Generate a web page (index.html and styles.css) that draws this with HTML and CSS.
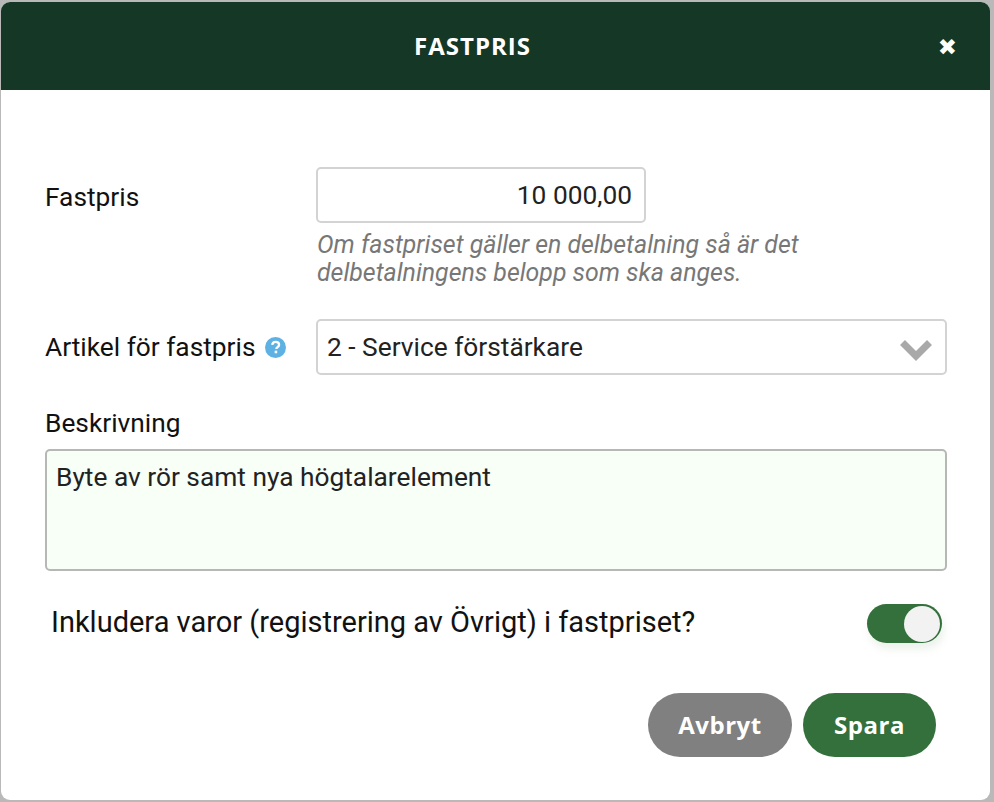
FILE: index.html
```html
<!DOCTYPE html>
<html>
<head>
    <title>Fastpris</title>
    <link rel="stylesheet" href="styles.css">
</head>
<body>
    <div class="modal">
        <div class="modal-header">
            <h1>FASTPRIS</h1>
            <span class="close">&#10006;</span>
        </div>
        <form class="modal-body">
            <!-- Price -->
            <div class="row price-row">
                <label class="side-label price-label" for="price">Fastpris</label>
                <div class="price-field">
                    <input type="text" id="price" class="price-input" value="10 000,00">
                    <p class="hint">Om fastpriset gäller en delbetalning så är det delbetalningens belopp som ska anges.</p>
                </div>
            </div>

            <!-- Article -->
            <div class="row article-row">
                <label class="side-label" for="article">Artikel för fastpris
                    <svg class="help" viewBox="0 0 20 20" width="21" height="21">
                        <circle cx="10" cy="10" r="10" fill="#5db2e3"/>
                        <path d="M6.9 7.6c.2-1.9 1.5-2.9 3.3-2.9 1.9 0 3.2 1.1 3.2 2.6 0 1.2-.6 1.8-1.6 2.5-.8.5-1 .8-1 1.7" fill="none" stroke="#fff" stroke-width="2.2"/>
                        <rect x="9.2" y="13" width="2.4" height="2.5" fill="#fff"/>
                    </svg>
                </label>
                <div class="select" id="article">
                    <span>2 - Service förstärkare</span>
                    <svg class="chevron" viewBox="0 0 32 21" width="32" height="21">
                        <path d="M2.5 2.5L16 16 29.5 2.5" fill="none" stroke="#a9a9a9" stroke-width="7"/>
                    </svg>
                </div>
            </div>

            <!-- Description -->
            <label class="desc-label" for="desc">Beskrivning</label>
            <textarea id="desc" class="desc">Byte av rör samt nya högtalarelement</textarea>

            <!-- Include goods -->
            <div class="row toggle-row">
                <span class="toggle-text">Inkludera varor (registrering av Övrigt) i fastpriset?</span>
                <span class="toggle"><span class="knob"></span></span>
            </div>

            <div class="buttons">
                <button type="button" class="btn btn-cancel">Avbryt</button>
                <button type="button" class="btn btn-save">Spara</button>
            </div>
        </form>
    </div>
</body>
</html>
```

FILE: styles.css
```css
html, body {
    height: 100%;
}

body {
    margin: 0;
    background-color: #b9b9b9;
    font-family: Roboto, "Liberation Sans", sans-serif;
    font-size: 26.3px;
    color: #111;
    overflow: hidden;
}

.modal {
    box-sizing: border-box;
    height: 798px;
    margin: 2px 4px 0 1px;
    background-color: #fff;
    border-radius: 9px;
    overflow: hidden;
}

.modal-header {
    box-sizing: border-box;
    height: 88px;
    display: flex;
    align-items: center;
    justify-content: center;
    position: relative;
    padding-right: 46px;
    background-color: #153726;
    color: #fff;
}

.modal-header h1 {
    margin: 0 0 2px;
    font-family: "Open Sans", sans-serif;
    font-size: 24px;
    font-weight: 700;
    letter-spacing: 1px;
}

.close {
    position: absolute;
    right: 33px;
    top: 31px;
    font-family: "DejaVu Sans", sans-serif;
    font-size: 23px;
    line-height: 28px;
}

.modal-body {
    display: block;
    padding: 77px 43px 0 44px;
}

.row {
    display: flex;
}

.side-label {
    width: 271px;
    flex-shrink: 0;
    display: flex;
    align-items: center;
    gap: 10px;
}

.price-label {
    align-items: flex-start;
    padding-top: 15px;
}

.price-input {
    box-sizing: border-box;
    display: block;
    width: 330px;
    height: 56px;
    padding: 0 12px;
    border: 2px solid #d3d3d3;
    border-radius: 5px;
    font-family: inherit;
    font-size: 26.3px;
    color: #222;
    text-align: right;
}

.hint {
    margin: 8px 0 0 1px;
    font-size: 24.9px;
    line-height: 28px;
    font-style: italic;
    color: #777;
    width: 540px;
}

.article-row {
    margin-top: 32px;
}

.select {
    box-sizing: border-box;
    flex: 1;
    height: 56px;
    display: flex;
    align-items: center;
    justify-content: space-between;
    padding: 0 13px 0 9px;
    border: 2px solid #d3d3d3;
    border-radius: 5px;
    color: #222;
}

.chevron {
    margin-top: 7px;
}

.desc-label {
    display: block;
    margin-top: 34px;
    line-height: 28px;
}

.desc {
    box-sizing: border-box;
    display: block;
    width: 100%;
    height: 122px;
    margin-top: 12px;
    padding: 11px 9px;
    border: 2px solid #b5b8b5;
    border-radius: 5px;
    background-color: #f7fff7;
    font-family: inherit;
    font-size: 26.3px;
    color: #222;
    resize: none;
}

.toggle-row {
    margin-top: 33px;
    padding: 0 5px 0 6px;
    justify-content: space-between;
    align-items: center;
}

.toggle-text {
    font-size: 29px;
    margin-top: -3px;
}

.toggle {
    width: 75px;
    height: 39px;
    display: flex;
    justify-content: flex-end;
    align-items: center;
    padding-right: 2px;
    box-sizing: border-box;
    border-radius: 20px;
    background-color: #33703c;
    box-shadow: 2px 6px 8px rgba(120, 160, 120, 0.15);
}

.knob {
    width: 36px;
    height: 36px;
    border-radius: 50%;
    background-color: #f2f2f2;
}

.buttons {
    display: flex;
    justify-content: flex-end;
    gap: 11px;
    margin-top: 50px;
    padding-right: 11px;
}

.btn {
    height: 64px;
    padding: 0 0 2px;
    border: none;
    border-radius: 32px;
    font-family: "Open Sans", sans-serif;
    font-size: 24px;
    font-weight: 700;
    letter-spacing: 0.5px;
    color: #fff;
}

.btn-cancel {
    width: 144px;
    background-color: #808080;
}

.btn-save {
    width: 133px;
    background-color: #33703c;
}
```
